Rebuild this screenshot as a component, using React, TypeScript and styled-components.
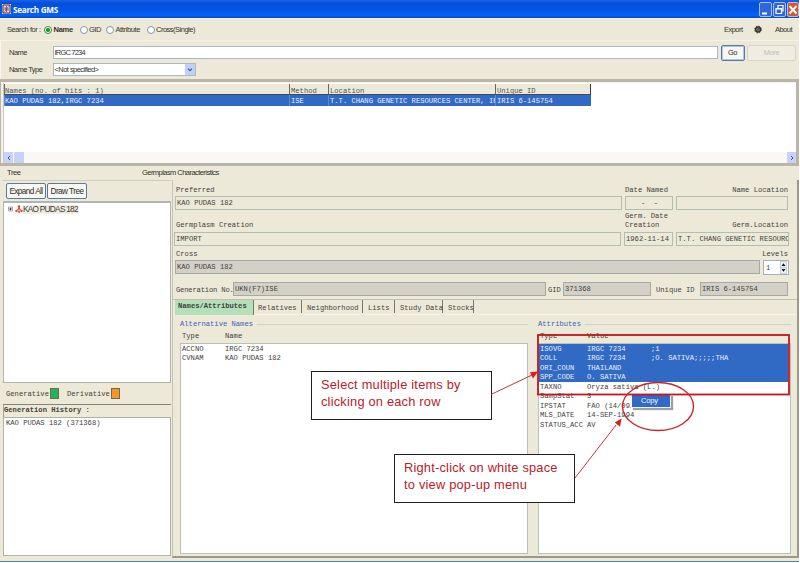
import React from "react";
import styled, { createGlobalStyle, css } from "styled-components";

const Global = createGlobalStyle`
  * { box-sizing: border-box; }
  html, body { margin: 0; padding: 0; background: #fff; overflow: hidden; }
  body { font-family: "Liberation Sans", Arial, sans-serif; }
`;

const mono = css`
  font-family: "Liberation Mono", "Courier New", monospace;
  font-size: 7.16px;
  color: #45423c;
  white-space: pre;
`;

const Window = styled.div`
  position: relative;
  width: 799px;
  height: 562px;
  overflow: hidden;
  background: #ece9d8;
  border-bottom: 1px solid #4d84ad;
  display: flex;
  flex-direction: column;
`;

const TitleBar = styled.header`
  height: 18px;
  flex: none;
  display: flex;
  align-items: center;
  padding: 0 0 0 2px;
  background: linear-gradient(#1c62e2 0, #0450dc 18%, #0454e4 55%, #0562fb 85%, #0346c4 100%);
`;
const TitleText = styled.h1`
  margin: 0 auto 0 2px;
  font: bold 8.2px/17px "Open Sans", sans-serif;
  letter-spacing: -0.3px;
  color: #fff;
  white-space: nowrap;
`;
const CaptionButton = styled.span<{ $close?: boolean }>`
  width: ${(p) => (p.$close ? 12 : 13)}px;
  height: 15px;
  margin-left: 1px;
  border: 1px solid #a9c2f3;
  border-radius: 2px;
  background: ${(p) => (p.$close ? "#d9532f" : "#2f65dd")};
  display: flex;
  svg { display: block; }
`;

const Toolbar = styled.div`
  height: 23px;
  flex: none;
  display: flex;
  align-items: center;
  padding: 0 7px 0 7px;
  border-bottom: 1px solid #f5f3e9;
  border-top: 1px solid #f4f2ea;
`;
const Ui = styled.span<{ $w?: number; $size?: number; $sp?: number; $bold?: boolean; $color?: string }>`
  font-size: ${(p) => p.$size ?? 7.5}px;
  letter-spacing: ${(p) => p.$sp ?? -0.5}px;
  font-weight: ${(p) => (p.$bold ? 700 : 400)};
  color: ${(p) => p.$color ?? "#35332e"};
  width: ${(p) => (p.$w ? p.$w + "px" : "auto")};
  flex: none;
  line-height: 10px;
  white-space: nowrap;
`;
const Radio = styled.i<{ $on?: boolean }>`
  width: 8px;
  height: 8px;
  flex: none;
  margin-right: 1.5px;
  border-radius: 50%;
  border: 1px solid ${(p) => (p.$on ? "#2f8f4a" : "#8396a8")};
  background: ${(p) => (p.$on ? "radial-gradient(circle, #21a121 0 1.8px, #fff 2.4px)" : "#fff")};
`;
const GearSlot = styled.span`
  width: 21px;
  height: 9px;
  display: flex;
  justify-content: flex-start;
`;
const Push = styled.span`flex: 1;`;

const SearchForm = styled.section`
  height: 38px;
  flex: none;
  padding: 4px 3px 0 8px;
  display: flex;
  flex-direction: column;
  gap: 3px;
  border-left: 1px solid #f8f6ee;
`;
const FormRow = styled.div<{ $h: number }>`
  display: flex;
  height: ${(p) => p.$h}px;
  align-items: center;
`;
const Input = styled.div<{ $w: number }>`
  width: ${(p) => p.$w}px;
  height: 13px;
  flex: none;
  background: #fff;
  border: 1px solid #aab9bf;
  padding-left: 0.5px;
  display: flex;
  align-items: center;
  overflow: hidden;
`;
const DropArrow = styled.span`
  margin-left: auto;
  width: 10px;
  height: 11px;
  background: #c0d0f8;
  display: flex;
  align-items: center;
  justify-content: center;
`;
const Button = styled.button<{ $w: number; $h: number; $primary?: boolean; $off?: boolean; $size?: number; $sp?: number }>`
  width: ${(p) => p.$w}px;
  height: ${(p) => p.$h}px;
  flex: none;
  padding: 0;
  font-family: inherit;
  font-size: ${(p) => p.$size ?? 7.4}px;
  letter-spacing: ${(p) => p.$sp ?? -0.35}px;
  color: ${(p) => (p.$off ? "#c3c1b6" : "#2d2d2a")};
  background: ${(p) => (p.$off ? "#efede1" : "#f8f7f3")};
  border: 1px solid ${(p) => (p.$off ? "#d8d5c6" : "#587a9e")};
  border-radius: 2px;
  box-shadow: ${(p) => (p.$primary ? "inset 0 0 0 1px #aec6ea" : "none")};
  white-space: nowrap;
`;

const Results = styled.section`
  height: 87px;
  flex: none;
  border: solid #b9b6a9;
  border-width: 3px 3px 3px 1px;
  padding: 1px 0 0 2px;
  background: #f3f1e8;
`;
const ResultsBody = styled.div`
  height: 80px;
  padding-top: 1px;
  background: #fff;
  border-left: 1px solid #c9c6ba;
  display: flex;
  flex-direction: column;
`;
const ResultRow = styled.div<{ $head?: boolean }>`
  ${mono}
  display: grid;
  grid-template-columns: 285px 39px 167px 96px;
  width: 587px;
  height: ${(p) => (p.$head ? 11 : 10.5)}px;
  line-height: ${(p) => (p.$head ? 14 : 13)}px;
  color: ${(p) => (p.$head ? "#57534a" : "#e9f0ff")};
  background: ${(p) => (p.$head ? "#ece9d8" : "#316ac5")};
  border-bottom: ${(p) => (p.$head ? "1px solid #3c4a5c" : "0")};
  border-right: ${(p) => (p.$head ? "1px solid #3f3d38" : "0")};
`;
const ResultCell = styled.span<{ $head?: boolean }>`
  overflow: hidden;
  padding-left: 1px;
  border-left: 1px solid ${(p) => (p.$head ? "#6b685f" : "#5f8bd0")};
  &:first-child { padding-left: 0; }
`;
const HScroll = styled.div`
  margin-top: auto;
  height: 11px;
  display: flex;
  gap: 1px;
  background: #f9f8f4;
`;
const ScrollPart = styled.span<{ $w: number; $end?: boolean }>`
  width: ${(p) => p.$w}px;
  margin-left: ${(p) => (p.$end ? "auto" : "0")};
  height: 11px;
  background: #c5d3fb;
  border-radius: 1px;
  display: flex;
  align-items: center;
  justify-content: center;
`;

const PaneTitles = styled.div`
  height: 14px;
  flex: none;
  display: flex;
  align-items: center;
  padding-left: 7px;
`;
const Panes = styled.div`
  flex: 1;
  min-height: 0;
  display: flex;
  padding-left: 3px;
`;
const TreePane = styled.aside`
  width: 168px;
  flex: none;
  border-top: 1px solid #d0cdbf;
  display: flex;
  flex-direction: column;
`;
const TreeButtons = styled.div`
  height: 20px;
  display: flex;
  gap: 1px;
  padding: 2px 0 0 3px;
`;
const Tree = styled.div`
  height: 182px;
  background: #fff;
  border: 1px solid #b4b5a9;
  border-top: 2px solid #b2b5b4;
  padding: 1px 0 0 4px;
`;
const TreeItem = styled.div`
  display: flex;
  align-items: center;
  height: 10px;
`;
const TreeLabel = styled.span`
  background: #efece0;
  font-size: 8.3px;
  letter-spacing: -0.75px;
  line-height: 9px;
  color: #3e3a34;
  white-space: nowrap;
`;
const Legend = styled.div`
  ${mono}
  height: 22px;
  display: flex;
  align-items: center;
  padding-left: 3px;
  border-bottom: 1px solid #85857a;
`;
const Swatch = styled.i<{ $c: string }>`
  width: 9px;
  height: 11px;
  margin: 0 8px 0 1px;
  background: ${(p) => p.$c};
  border: 1px solid #76664a;
`;
const HistoryTitle = styled.h2`
  ${mono}
  margin: 0;
  font-weight: 700;
  height: 12px;
  line-height: 10px;
  border-left: 1px solid #a5a398;
`;
const History = styled.div`
  ${mono}
  height: 139px;
  background: #fff;
  border: 1px solid #b0b1a7;
  padding: 1px 0 0 2px;
  line-height: 8px;
`;

const Details = styled.main`
  flex: 1;
  min-width: 0;
  height: 378px;
  margin-left: 1px;
  border: solid #9c998b;
  border-width: 0 2px 2px 1px;
  border-left-color: #c5c3b7;
  display: flex;
  flex-direction: column;
`;
const Labels = styled.div<{ $h: number; $pt?: number }>`
  ${mono}
  height: ${(p) => p.$h}px;
  flex: none;
  display: grid;
  grid-template-columns: 449px 64px 1fr;
  align-items: end;
  line-height: 9px;
  padding: 0 9px ${(p) => p.$pt ?? 1}px 3px;
`;
const RightLabel = styled.span`text-align: right;`;
const Fields = styled.div<{ $left?: number }>`
  display: flex;
  flex: none;
  height: 14px;
  gap: 3px;
  padding-left: ${(p) => p.$left ?? 2}px;
`;
const Field = styled.div<{ $w: number; $gray?: boolean; $center?: boolean }>`
  ${mono}
  width: ${(p) => p.$w}px;
  height: 14px;
  flex: none;
  overflow: hidden;
  line-height: 12px;
  padding-left: 1px;
  text-align: ${(p) => (p.$center ? "center" : "left")};
  border: 1px solid ${(p) => (p.$gray ? "#a7a9a4" : "#b3beb2")};
  background: ${(p) => (p.$gray ? "#d3d0c7" : "#ece9d8")};
`;
const Spinner = styled.div`
  ${mono}
  width: 26px;
  height: 15px;
  padding: 0 1px 0 2px;
  background: #fff;
  border: 1px solid #a4b3bb;
  display: flex;
  align-items: center;
  justify-content: space-between;
`;
const GenerationRow = styled.div`
  ${mono}
  height: 14px;
  margin: 8px 0 3px;
  padding-left: 3px;
  flex: none;
  display: grid;
  grid-template-columns: 57px 313px 17px 88px 49px 88px;
  line-height: 16px;
`;
const GenerationLabel = styled.span`letter-spacing: -0.17px;`;
const UniqueLabel = styled.span`padding-left: 5px;`;
const GidLabel = styled.span`padding-left: 2px;`;

const Tabs = styled.nav`
  height: 16px;
  flex: none;
  display: flex;
  padding-left: 2px;
  border-top: 1px solid #bfbfb3;
  border-bottom: 1px solid #f6f4ea;
`;
const Tab = styled.span<{ $w: number; $pl: number; $active?: boolean }>`
  ${mono}
  width: ${(p) => p.$w}px;
  height: ${(p) => (p.$active ? 15 : 13)}px;
  flex: none;
  padding-left: ${(p) => p.$pl}px;
  line-height: ${(p) => (p.$active ? 12 : 16)}px;
  font-weight: ${(p) => (p.$active ? 700 : 400)};
  background: ${(p) => (p.$active ? "#b5dfb9" : "transparent")};
  border-right: 1px solid #77766b;
`;

const Groups = styled.div`
  flex: 1;
  min-height: 0;
  display: flex;
  gap: 6px;
  padding: 4px 3px 2px 5px;
`;
const Group = styled.section<{ $w: number }>`
  width: ${(p) => p.$w}px;
  display: flex;
  flex-direction: column;
  padding: 0 2px;
`;
const GroupTitle = styled.h3`
  ${mono}
  margin: 0;
  height: 10px;
  line-height: 10px;
  font-weight: 400;
  color: #3c62b5;
  display: flex;
  align-items: center;
  &::after { content: ""; flex: 1; margin-left: 4px; border-top: 1px solid #d3d1c1; }
`;
const ListHead = styled.div<{ $c: number }>`
  ${mono}
  display: grid;
  grid-template-columns: ${(p) => p.$c}px 1fr;
  height: 14px;
  line-height: 14px;
  padding-left: 2px;
`;
const List = styled.div`
  flex: 1;
  background: #fff;
  border: 1px solid #b9c1b8;
`;
const ListRow = styled.div<{ $cols: string; $sel?: boolean }>`
  ${mono}
  display: grid;
  grid-template-columns: ${(p) => p.$cols};
  height: 9.45px;
  line-height: 11px;
  margin-right: 2px;
  padding-left: 1px;
  color: ${(p) => (p.$sel ? "#e9f0ff" : "#45423c")};
  background: ${(p) => (p.$sel ? "#316ac5" : "transparent")};
`;

const Callout = styled.div<{ $x: number; $y: number; $w: number; $h: number }>`
  position: absolute;
  left: ${(p) => p.$x}px;
  top: ${(p) => p.$y}px;
  width: ${(p) => p.$w}px;
  height: ${(p) => p.$h}px;
  padding: 4px 9px;
  background: #fff;
  border: 1px solid #202020;
  color: #b9202b;
  font-size: 12.8px;
  letter-spacing: 0.22px;
  line-height: 17px;
  white-space: nowrap;
`;
const PopupMenu = styled.div`
  position: absolute;
  left: 631px;
  top: 394px;
  width: 40px;
  height: 14px;
  padding: 1px;
  background: #f3f4f6;
  box-shadow: 2px 2px 1px #96a0b0;
`;
const PopupItem = styled.div`
  height: 12px;
  background: #316ac5;
  color: #f2f6ff;
  font-size: 7.6px;
  line-height: 12px;
  padding-left: 9px;
  letter-spacing: -0.25px;
`;
const Markup = styled.svg`
  position: absolute;
  left: 0;
  top: 0;
  pointer-events: none;
`;

const attributes: [string, string, string][] = [
  ["ISOVG", "IRGC 7234", ";1"],
  ["COLL", "IRGC 7234", ";O. SATIVA;;;;;THA"],
  ["ORI_COUN", "THAILAND", ""],
  ["SPP_CODE", "O. SATIVA", ""],
  ["TAXNO", "Oryza sativa (L.)", ""],
  ["SampStat", "3", ""],
  ["IPSTAT", "FAO (14/09/94)", ""],
  ["MLS_DATE", "14-SEP-1994", ""],
  ["STATUS_ACC", "AV", ""],
];
const results = ["KAO PUDAS 182,IRGC 7234", "ISE", "T.T. CHANG GENETIC RESOURCES CENTER, IR", "IRIS 6-145754"];
const resultHeads = ["Names (no. of hits : 1)", "Method", "Location", "Unique ID"];

export default function App() {
  return (
    <Window>
      <Global />
      <TitleBar>
        <svg width="9" height="10" viewBox="0 0 9 10">
          <rect width="9" height="10" fill="#e9dfe4" />
          <path d="M1 1h7v8H1z" fill="none" stroke="#482638" />
          <path d="M2.5 3l4 4M6.5 2.5l-4 5M4.5 2v6M2 5h5" stroke="#7a3c50" strokeWidth=".8" />
        </svg>
        <TitleText>Search GMS</TitleText>
        <CaptionButton>
          <svg width="11" height="13"><path d="M2 10.5h5" stroke="#fff" strokeWidth="2" /></svg>
        </CaptionButton>
        <CaptionButton>
          <svg width="11" height="13"><path d="M4 5V2.5h5V8H7.500M2 5.500h5.500v5H2zM2 6h5.500" fill="none" stroke="#fff" strokeWidth="1.200" /></svg>
        </CaptionButton>
        <CaptionButton $close>
          <svg width="10" height="13"><path d="M1.500 3l7 7.500M8.500 3l-7 7.500" stroke="#fff" strokeWidth="1.900" /></svg>
        </CaptionButton>
      </TitleBar>

      <Toolbar>
        <Ui $w={37} $sp={-0.42}>Search for :</Ui>
        <Radio $on /><Ui $w={26} $bold $sp={-0.25}>Name</Ui>
        <Radio /><Ui $w={17}>GID</Ui>
        <Radio /><Ui $w={31} $sp={-0.38}>Attribute</Ui>
        <Radio /><Ui $sp={-0.5}>Cross(Single)</Ui>
        <Push />
        <Ui $w={30} $sp={-0.5}>Export</Ui>
        <GearSlot>
          <svg width="8" height="9" viewBox="0 0 8 9">
            <circle cx="4" cy="4.500" r="2.500" fill="#8b8982" stroke="#33322f" strokeWidth="1.300" />
            <circle cx="4" cy="4.500" r="3.400" fill="none" stroke="#33322f" strokeWidth="1" strokeDasharray="1.400 1.270" />
            <path d="M2 5.500l4-2M4 3v3" stroke="#3c3b37" strokeWidth=".7" />
          </svg>
        </GearSlot>
        <Ui $sp={-0.5}>About</Ui>
      </Toolbar>

      <SearchForm>
        <FormRow $h={15}>
          <Ui $w={44}>Name</Ui>
          <Input $w={665}><Ui $sp={-0.8}>IRGC 7234</Ui></Input>
          <Push />
          <Button $w={24} $h={16} $primary>Go</Button>
          <Push />
          <Button $w={49} $h={16} $off>More</Button>
        </FormRow>
        <FormRow $h={13}>
          <Ui $w={44} $sp={-0.55}>Name Type</Ui>
          <Input $w={143}>
            <Ui $sp={-0.55}>&lt;Not specified&gt;</Ui>
            <DropArrow>
              <svg width="6" height="4"><path d="M1 .7l2 2 2-2" fill="none" stroke="#40598c" strokeWidth="1.200" /></svg>
            </DropArrow>
          </Input>
        </FormRow>
      </SearchForm>

      <Results>
        <ResultsBody>
          <ResultRow $head>
            {resultHeads.map((t) => <ResultCell $head key={t}>{t}</ResultCell>)}
          </ResultRow>
          <ResultRow>
            {results.map((t) => <ResultCell key={t}>{t}</ResultCell>)}
          </ResultRow>
          <HScroll>
            <ScrollPart $w={9}><svg width="4" height="6"><path d="M3 1L1 3l2 2" fill="none" stroke="#3e5a94" /></svg></ScrollPart>
            <ScrollPart $w={10} />
            <ScrollPart $w={9} $end><svg width="4" height="6"><path d="M1 1l2 2-2 2" fill="none" stroke="#3e5a94" /></svg></ScrollPart>
          </HScroll>
        </ResultsBody>
      </Results>

      <PaneTitles>
        <Ui $w={135} $sp={-0.4}>Tree</Ui>
        <Ui $sp={-0.55}>Germplasm Characteristics</Ui>
      </PaneTitles>

      <Panes>
        <TreePane>
          <TreeButtons>
            <Button $w={40} $h={16} $size={8.2} $sp={-0.55}>Expand All</Button>
            <Button $w={40} $h={16} $size={8.2} $sp={-0.55}>Draw Tree</Button>
          </TreeButtons>
          <Tree>
            <TreeItem>
              <svg width="15" height="10" viewBox="0 0 15 10">
                <path d="M.5 3h4v4h-4z" fill="#fff" stroke="#8b8b85" strokeWidth=".7" />
                <path d="M1.200 5h2.600M2.500 3.700v2.600" stroke="#222" strokeWidth=".8" />
                <path d="M11 3v5M8.500 7l2.500-3 2.500 3" fill="none" stroke="#d9482e" strokeWidth="1" />
                <circle cx="11" cy="2.500" r="1.200" fill="#d9482e" />
                <circle cx="8.400" cy="7" r="1.200" fill="#e0553a" />
                <circle cx="11" cy="8" r="1.100" fill="#e0553a" />
                <circle cx="13.600" cy="7" r="1.200" fill="#e0553a" />
              </svg>
              <TreeLabel>KAO PUDAS 182</TreeLabel>
            </TreeItem>
          </Tree>
          <Legend>
            Generative<Swatch $c="#1db560" />Derivative<Swatch $c="#f79428" />
          </Legend>
          <HistoryTitle>Generation History :</HistoryTitle>
          <History>KAO PUDAS 182 (371368)</History>
        </TreePane>

        <Details>
          <Labels $h={16}><span>Preferred</span><span>Date Named</span><RightLabel>Name Location</RightLabel></Labels>
          <Fields>
            <Field $w={447}>KAO PUDAS 182</Field>
            <Field $w={48} $center>{"-  -"}</Field>
            <Field $w={112} />
          </Fields>
          <Labels $h={22} $pt={2}><span>Germplasm Creation</span><span>{"Germ. Date\nCreation"}</span><RightLabel>Germ.Location</RightLabel></Labels>
          <Fields $left={1}>
            <Field $w={447}>IMPORT</Field>
            <Field $w={49}>1962-11-14</Field>
            <Field $w={113}>T.T. CHANG GENETIC RESOURC</Field>
          </Fields>
          <Labels $h={14}><span>Cross</span><span /><RightLabel>Levels</RightLabel></Labels>
          <Fields>
            <Field $w={585} $gray>KAO PUDAS 182</Field>
            <Spinner>
              1
              <svg width="7" height="13" viewBox="0 0 7 13">
                <path d="M.5.5h6v12h-6zM0 6.500h7" fill="#eef1fa" stroke="#b5bfce" strokeWidth=".7" />
                <path d="M1.500 5l2-2.800L5.500 5zM1.500 8l2 2.800L5.500 8z" fill="#111" />
              </svg>
            </Spinner>
          </Fields>
          <GenerationRow>
            <GenerationLabel>Generation No.</GenerationLabel><Field $w={313} $gray>UKN(F7)ISE</Field>
            <GidLabel>GID</GidLabel><Field $w={88} $gray>371368</Field>
            <UniqueLabel>Unique ID</UniqueLabel><Field $w={88} $gray>IRIS 6-145754</Field>
          </GenerationRow>
          <Tabs>
            <Tab $w={79} $pl={3} $active>Names/Attributes</Tab>
            <Tab $w={48} $pl={4}>Relatives</Tab>
            <Tab $w={61} $pl={5}>Neighborhood</Tab>
            <Tab $w={32} $pl={5}>Lists</Tab>
            <Tab $w={48} $pl={5}>Study Data</Tab>
            <Tab $w={31} $pl={5}>Stocks</Tab>
          </Tabs>
          <Groups>
            <Group $w={352}>
              <GroupTitle>Alternative Names</GroupTitle>
              <ListHead $c={43}><span>Type</span><span>Name</span></ListHead>
              <List>
                <ListRow $cols="43px 1fr"><span>ACCNO</span><span>IRGC 7234</span></ListRow>
                <ListRow $cols="43px 1fr"><span>CVNAM</span><span>KAO PUDAS 182</span></ListRow>
              </List>
            </Group>
            <Group $w={257}>
              <GroupTitle>Attributes</GroupTitle>
              <ListHead $c={47}><span>Type</span><span>Value</span></ListHead>
              <List>
                {attributes.map(([a, b, c], i) => (
                  <ListRow key={a} $cols="47px 64px 1fr" $sel={i < 4}>
                    <span>{a}</span><span>{b}</span><span>{c}</span>
                  </ListRow>
                ))}
              </List>
            </Group>
          </Groups>
        </Details>
      </Panes>

      <Callout $x={311} $y={371} $w={181} $h={49}>Select multiple items by<br />clicking on each row</Callout>
      <Callout $x={394} $y={454} $w={181} $h={49}>Right-click on white space<br />to view pop-up menu</Callout>
      <PopupMenu><PopupItem>Copy</PopupItem></PopupMenu>
      <Markup width="799" height="562">
        <rect x="538" y="335" width="251" height="59.500" fill="none" stroke="#c4161c" strokeWidth="1.800" />
        <ellipse cx="658" cy="406.500" rx="35.500" ry="24" fill="none" stroke="#c8232b" strokeWidth="1.400" />
        <path d="M491 394.500L532 375M575 478L616 425" stroke="#c8323c" strokeWidth="1" />
        <path d="M538 371.500l-8 .8 3 6.200zM621.500 418.500l-6.700 4 5.200 4.200z" fill="#e01b22" />
      </Markup>
    </Window>
  );
}
